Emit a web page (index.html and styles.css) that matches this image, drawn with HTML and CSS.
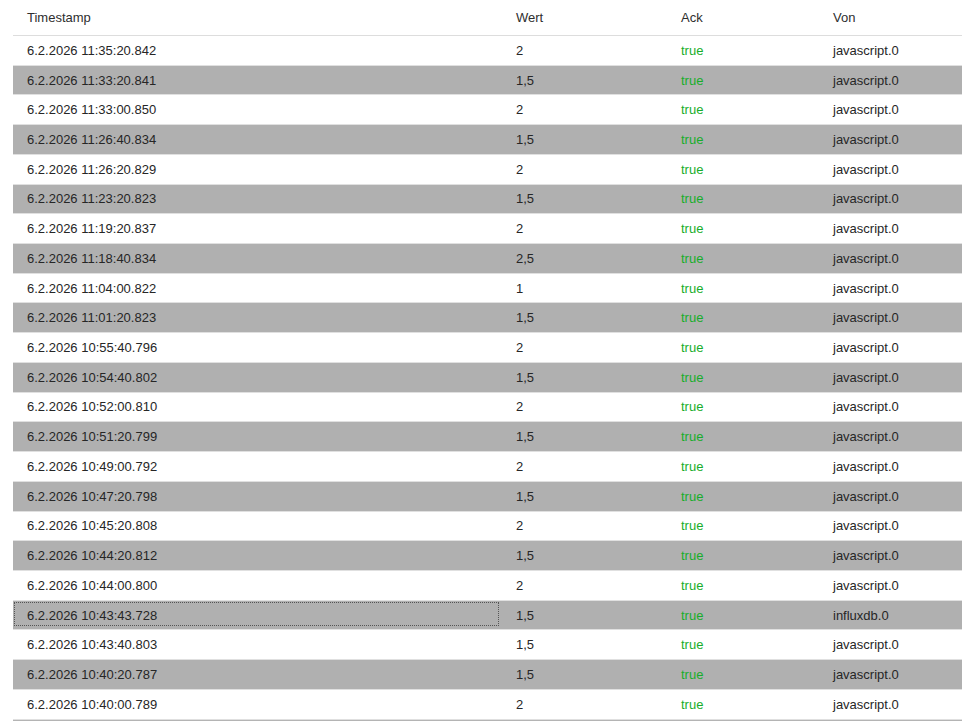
FILE: index.html
```html
<!DOCTYPE html>
<html lang="de">
<head>
<meta charset="utf-8">
<title>Historie</title>
<link rel="stylesheet" href="styles.css">
</head>
<body>
<div class="wrap">
<table class="history">
<colgroup>
<col class="c-ts"><col class="c-val"><col class="c-ack"><col class="c-from">
</colgroup>
<thead>
<tr><th>Timestamp</th><th>Wert</th><th>Ack</th><th>Von</th></tr>
</thead>
<tbody>
<tr><td>6.2.2026 11:35:20.842</td><td>2</td><td class="ack">true</td><td>javascript.0</td></tr>
<tr class="alt"><td>6.2.2026 11:33:20.841</td><td>1,5</td><td class="ack">true</td><td>javascript.0</td></tr>
<tr><td>6.2.2026 11:33:00.850</td><td>2</td><td class="ack">true</td><td>javascript.0</td></tr>
<tr class="alt"><td>6.2.2026 11:26:40.834</td><td>1,5</td><td class="ack">true</td><td>javascript.0</td></tr>
<tr><td>6.2.2026 11:26:20.829</td><td>2</td><td class="ack">true</td><td>javascript.0</td></tr>
<tr class="alt"><td>6.2.2026 11:23:20.823</td><td>1,5</td><td class="ack">true</td><td>javascript.0</td></tr>
<tr><td>6.2.2026 11:19:20.837</td><td>2</td><td class="ack">true</td><td>javascript.0</td></tr>
<tr class="alt"><td>6.2.2026 11:18:40.834</td><td>2,5</td><td class="ack">true</td><td>javascript.0</td></tr>
<tr><td>6.2.2026 11:04:00.822</td><td>1</td><td class="ack">true</td><td>javascript.0</td></tr>
<tr class="alt"><td>6.2.2026 11:01:20.823</td><td>1,5</td><td class="ack">true</td><td>javascript.0</td></tr>
<tr><td>6.2.2026 10:55:40.796</td><td>2</td><td class="ack">true</td><td>javascript.0</td></tr>
<tr class="alt"><td>6.2.2026 10:54:40.802</td><td>1,5</td><td class="ack">true</td><td>javascript.0</td></tr>
<tr><td>6.2.2026 10:52:00.810</td><td>2</td><td class="ack">true</td><td>javascript.0</td></tr>
<tr class="alt"><td>6.2.2026 10:51:20.799</td><td>1,5</td><td class="ack">true</td><td>javascript.0</td></tr>
<tr><td>6.2.2026 10:49:00.792</td><td>2</td><td class="ack">true</td><td>javascript.0</td></tr>
<tr class="alt"><td>6.2.2026 10:47:20.798</td><td>1,5</td><td class="ack">true</td><td>javascript.0</td></tr>
<tr><td>6.2.2026 10:45:20.808</td><td>2</td><td class="ack">true</td><td>javascript.0</td></tr>
<tr class="alt"><td>6.2.2026 10:44:20.812</td><td>1,5</td><td class="ack">true</td><td>javascript.0</td></tr>
<tr><td>6.2.2026 10:44:00.800</td><td>2</td><td class="ack">true</td><td>javascript.0</td></tr>
<tr class="alt"><td class="focus">6.2.2026 10:43:43.728</td><td>1,5</td><td class="ack">true</td><td>influxdb.0</td></tr>
<tr><td>6.2.2026 10:43:40.803</td><td>1,5</td><td class="ack">true</td><td>javascript.0</td></tr>
<tr class="alt"><td>6.2.2026 10:40:20.787</td><td>1,5</td><td class="ack">true</td><td>javascript.0</td></tr>
<tr><td>6.2.2026 10:40:00.789</td><td>2</td><td class="ack">true</td><td>javascript.0</td></tr>
</tbody>
</table>
</div>
</body>
</html>
```
FILE: styles.css
```css
html, body {
  margin: 0;
  padding: 0;
  background: #ffffff;
  overflow: hidden;
}

body {
  font-family: "Liberation Sans", Arial, sans-serif;
  font-size: 13px;
  color: #333333;
}

.wrap {
  padding-left: 13px;
}

.history {
  width: 949px;
  table-layout: fixed;
  border-collapse: separate;
  border-spacing: 0;
  border-bottom: 3px solid #b4b4b4;
}

.c-ts { width: 489px; }
.c-val { width: 165px; }
.c-ack { width: 152px; }
.c-from { width: 143px; }

.history th {
  height: 35px;
  padding: 0 0 0 14px;
  text-align: left;
  font-weight: normal;
  color: #2e2e2e;
  border-bottom: 1px solid #dddddd;
  vertical-align: middle;
  white-space: nowrap;
}

.history td {
  height: 28.73px;
  padding: 0 0 0 14px;
  border-bottom: 1px solid #e0e0e0;
  vertical-align: middle;
  white-space: nowrap;
  color: #262626;
}

.history tr.alt td {
  background: #b0b0b0;
}

.history td.ack {
  color: #17ad2b;
}

.history td.focus {
  position: relative;
}

.history td.focus::after {
  content: "";
  position: absolute;
  left: 1px;
  right: 3px;
  top: 1px;
  bottom: 3px;
  border: 1px dotted #555555;
  pointer-events: none;
}
```
